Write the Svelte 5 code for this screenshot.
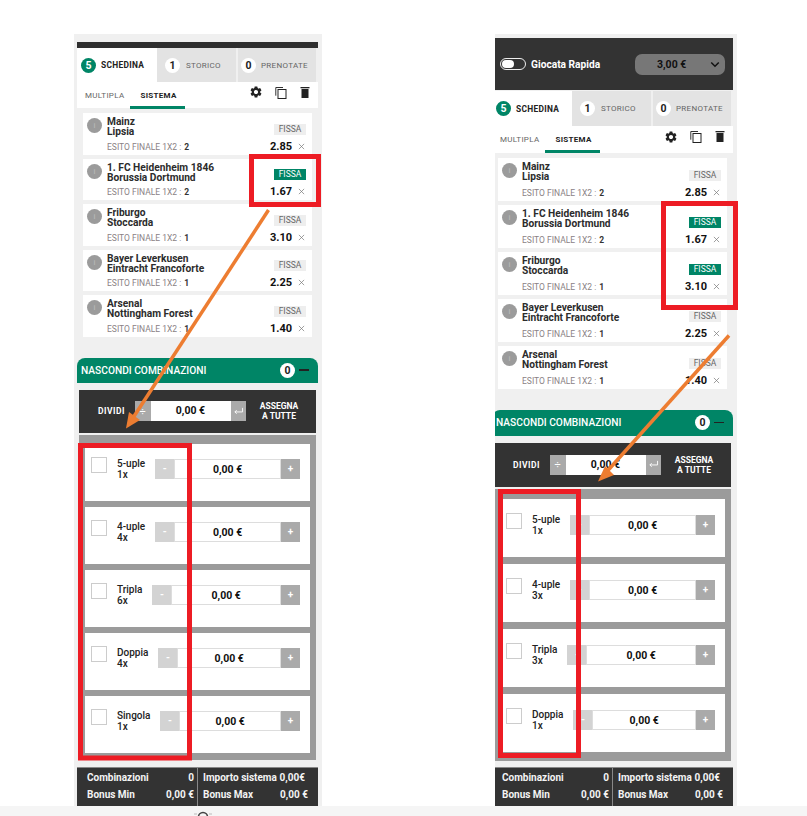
<script>
  const matches = [
    { home: "Mainz", away: "Lipsia", pick: "2", odd: "2.85" },
    { home: "1. FC Heidenheim 1846", away: "Borussia Dortmund", pick: "2", odd: "1.67" },
    { home: "Friburgo", away: "Stoccarda", pick: "1", odd: "3.10" },
    { home: "Bayer Leverkusen", away: "Eintracht Francoforte", pick: "1", odd: "2.25" },
    { home: "Arsenal", away: "Nottingham Forest", pick: "1", odd: "1.40" }
  ];

  const leftCombos = [
    { name: "5-uple", count: "1x" },
    { name: "4-uple", count: "4x" },
    { name: "Tripla", count: "6x" },
    { name: "Doppia", count: "4x" },
    { name: "Singola", count: "1x" }
  ];

  const rightCombos = [
    { name: "5-uple", count: "1x" },
    { name: "4-uple", count: "3x" },
    { name: "Tripla", count: "3x" },
    { name: "Doppia", count: "1x" }
  ];
</script>

{#snippet slip(fixed, combos)}
  <div class="tabs">
    <div class="tab active"><span class="num">5</span><span>SCHEDINA</span></div>
    <div class="tab"><span class="num">1</span><span>STORICO</span></div>
    <div class="tab last"><span class="num">0</span><span>PRENOTATE</span></div>
  </div>

  <div class="subtabs">
    <span class="sub">MULTIPLA</span>
    <span class="sub current">SISTEMA</span>
    <div class="tools">
      <svg viewBox="0 0 24 24" width="14" height="14">
        <path fill="#222" d="M19.14 12.94c.04-.3.06-.61.06-.94 0-.32-.02-.64-.07-.94l2.03-1.58a.49.49 0 0 0 .12-.61l-1.92-3.32a.488.488 0 0 0-.59-.22l-2.39.96c-.5-.38-1.03-.7-1.62-.94l-.36-2.54a.484.484 0 0 0-.48-.41h-3.84c-.24 0-.43.17-.47.41l-.36 2.54c-.59.24-1.13.57-1.62.94l-2.39-.96c-.22-.08-.47 0-.59.22L2.74 8.87c-.12.21-.08.47.12.61l2.03 1.58c-.05.3-.09.63-.09.94s.02.64.07.94l-2.03 1.58a.49.49 0 0 0-.12.61l1.92 3.32c.12.22.37.29.59.22l2.39-.96c.5.38 1.03.7 1.62.94l.36 2.54c.05.24.24.41.48.41h3.84c.24 0 .44-.17.47-.41l.36-2.54c.59-.24 1.13-.56 1.62-.94l2.39.96c.22.08.47 0 .59-.22l1.92-3.32c.12-.22.07-.47-.12-.61l-2.01-1.58zM12 15.6c-1.98 0-3.6-1.62-3.6-3.6s1.62-3.6 3.6-3.6 3.6 1.62 3.6 3.6-1.62 3.6-3.6 3.6z"/>
      </svg>
      <svg viewBox="0 0 12 13" width="12" height="13">
        <path fill="none" stroke="#333" d="M8 1.500H.8v8.200"/>
        <rect x="3" y="3.500" width="8" height="9" fill="#fff" stroke="#222"/>
      </svg>
      <svg viewBox="0 0 12 13" width="12" height="13">
        <rect x="1.500" y="1" width="9" height="1.300" fill="#222"/>
        <rect x="2.500" y="3" width="7" height="9" fill="#222"/>
      </svg>
    </div>
  </div>

  <div class="list">
    {#each matches as m, i}
      <div class="card">
        <span class="info">i</span>
        <div class="teams">
          <div class="names">{m.home}<br />{m.away}</div>
          <div class="esito">ESITO FINALE 1X2 : <b>{m.pick}</b></div>
        </div>
        <div class="side">
          <span class="badge" class:on={fixed.includes(i)}>FISSA</span>
          <div class="odd">
            <b>{m.odd}</b>
            <svg viewBox="0 0 8 8" width="7" height="7">
              <path stroke="#777" stroke-width="0.8" d="M1 1l6 6M7 1l-6 6"/>
            </svg>
          </div>
        </div>
      </div>
    {/each}
  </div>

  <div class="combo-head">
    <span>NASCONDI COMBINAZIONI</span>
    <span class="num light">0</span>
    <i class="dash"></i>
  </div>

  <div class="divide">
    <span class="divide-label">DIVIDI</span>
    <div class="divide-field">
      <span class="sq">÷</span>
      <span class="value">0,00 €</span>
      <span class="sq">
        <svg viewBox="0 0 12 10" width="11" height="9">
          <path fill="none" stroke="#fff" d="M10.500 1v4.500H2M4 3.500l-2 2 2 2"/>
        </svg>
      </span>
    </div>
    <span class="assign">ASSEGNA<br />A TUTTE</span>
  </div>

  <div class="combos">
    {#each combos as c}
      <div class="row">
        <span class="check"></span>
        <div class="label">{c.name}<br />{c.count}</div>
        <div class="stepper">
          <span class="minus">-</span>
          <span class="amount">0,00 €</span>
          <span class="plus">+</span>
        </div>
      </div>
    {/each}
  </div>

  <div class="summary">
    <div class="sum-col">
      <div><span>Combinazioni</span><span>0</span></div>
      <div><span>Bonus Min</span><span>0,00 €</span></div>
    </div>
    <div class="sum-col second">
      <div class="inset"><span>Importo sistema</span><span>0,00€</span></div>
      <div><span>Bonus Max</span><span>0,00 €</span></div>
    </div>
  </div>
{/snippet}

<div class="page">
  <div class="columns">
    <section class="col left">
      <div class="slip">
        <div class="topbar"></div>
        {@render slip([1], leftCombos)}
      </div>
    </section>

    <section class="col right">
      <div class="slip">
        <div class="quick">
          <span class="toggle"><i></i></span>
          <span class="quick-label">Giocata Rapida</span>
          <div class="stake">
            <span>3,00 €</span>
            <svg viewBox="0 0 12 8" width="10" height="7">
              <path fill="none" stroke="#111" stroke-width="1.8" d="M1.500 1.500L6 6l4.500-4.500"/>
            </svg>
          </div>
        </div>
        {@render slip([1, 2], rightCombos)}
      </div>
    </section>
  </div>

  <div class="strip">
    <svg viewBox="0 0 20 10" width="20" height="10">
      <circle cx="10" cy="11" r="4.500" fill="none" stroke="#444" stroke-width="1.6"/>
      <path stroke="#bbb" d="M1 8h3M16 8h3"/>
    </svg>
  </div>

  <!-- annotations drawn on top of the screenshot -->
  <svg class="notes" viewBox="0 0 807 816" width="807" height="816">
    <g fill="none" stroke="#ed1c24" stroke-width="5">
      <rect x="251.500" y="156.500" width="67" height="48"/>
      <rect x="80.500" y="445.500" width="109" height="312.500"/>
      <rect x="663.500" y="203.500" width="72" height="104"/>
      <rect x="500.500" y="491.500" width="78" height="264"/>
    </g>
    <g stroke="#ed7d31" stroke-width="3.500" fill="none">
      <path d="M268.500 210L129 424"/>
      <path d="M729 335.500L602 477"/>
    </g>
    <g fill="#ed7d31">
      <path d="M126 428.500L129 412L140 420z"/>
      <path d="M598 481.500L605 466L614 475z"/>
    </g>
  </svg>
</div>

<style>
  :global(body) {
    background: #fff;
  }

  .page {
    position: relative;
    width: 807px;
    height: 816px;
    overflow: hidden;
    font-family: Roboto, "Liberation Sans", sans-serif;
    color: #222;
  }

  .columns {
    display: flex;
    align-items: flex-start;
    height: 806px;
  }

  .col {
    background: #f0f0f0;
    box-sizing: border-box;
    height: 772px;
    overflow: hidden;
  }

  .col.left {
    width: 248px;
    margin: 34px 0 0 74px;
    padding: 8px 0 0 3px;
  }

  .col.right {
    width: 242px;
    margin: 34px 0 0 173px;
    padding: 4px 0 0 0;
  }

  .slip {
    width: 241px;
  }

  .right .slip {
    margin-left: -3px;
  }

  .topbar {
    height: 6px;
    background: #2f2f2f;
  }

  /* quick bet bar */
  .quick {
    height: 52px;
    margin-bottom: 1px;
    padding: 0 8px 0 8px;
    box-sizing: border-box;
    background: #333;
    display: flex;
    align-items: center;
    color: #fff;
  }

  .toggle {
    width: 26px;
    height: 12px;
    margin-right: 5px;
    box-sizing: border-box;
    border: 1px solid #eee;
    border-radius: 7px;
    padding: 1px;
    display: flex;
  }

  .toggle i {
    width: 12px;
    height: 8px;
    border-radius: 4px;
    background: #fff;
  }

  .quick-label {
    font-size: 10.200px;
    font-weight: 700;
    white-space: nowrap;
  }

  .stake {
    margin-left: auto;
    width: 90px;
    height: 21px;
    box-sizing: border-box;
    padding: 0 5px 0 22px;
    border-radius: 7px;
    background: #777;
    display: flex;
    align-items: center;
    justify-content: space-between;
    color: #111;
    font-size: 10.500px;
    font-weight: 700;
  }

  /* tabs */
  .tabs {
    display: flex;
    height: 34px;
  }

  .right .tabs {
    height: 35px;
  }

  .tab {
    width: 79px;
    box-sizing: border-box;
    padding-left: 8px;
    background: #e3e3e3;
    display: flex;
    align-items: center;
    gap: 6px;
    font-size: 8px;
    letter-spacing: 0.3px;
    color: #666;
  }

  .tab.active {
    width: 80px;
    padding-left: 4px;
    gap: 5px;
    background: #fff;
    color: #222;
    font-size: 8.400px;
    font-weight: 700;
  }

  .tab.last {
    width: 78px;
    margin-left: 2px;
    padding-left: 3px;
    gap: 5px;
  }

  .num {
    width: 15px;
    height: 15px;
    flex: none;
    border-radius: 50%;
    background: #fff;
    color: #222;
    display: flex;
    align-items: center;
    justify-content: center;
    font-size: 10.500px;
    font-weight: 700;
    letter-spacing: 0;
  }

  .active .num {
    background: #008566;
    color: #fff;
  }

  .subtabs {
    height: 26px;
    padding-left: 8px;
    background: #fff;
    display: flex;
    align-items: center;
    gap: 16px;
    font-size: 8px;
    letter-spacing: 0.3px;
    color: #666;
  }

  .right .subtabs {
    height: 27px;
  }

  .sub.current {
    position: relative;
    color: #222;
    font-weight: 700;
  }

  .sub.current::after {
    content: "";
    position: absolute;
    left: -10px;
    right: -8px;
    bottom: -9px;
    height: 3px;
    background: #008566;
  }

  .tools {
    margin-left: auto;
    margin-right: 7px;
    margin-bottom: 6px;
    display: flex;
    align-items: center;
    gap: 12px;
  }

  /* match cards */
  .list {
    margin: 5px 6px 0;
    display: flex;
    flex-direction: column;
    gap: 4px;
  }

  .right .list {
    gap: 4.500px;
  }

  .card {
    height: 41.500px;
    box-sizing: border-box;
    padding: 4px 6px 2px 4px;
    background: #fff;
    display: flex;
  }

  .right .card {
    height: 42.500px;
  }

  .info {
    width: 15px;
    height: 15px;
    margin: 1px 5px 0 0;
    flex: none;
    border-radius: 50%;
    background: #9b9b9b;
    color: #bbb;
    display: flex;
    align-items: center;
    justify-content: center;
    font-size: 8px;
  }

  .teams {
    flex: 1;
    display: flex;
    flex-direction: column;
    justify-content: space-between;
    min-width: 0;
  }

  .names {
    font-size: 10.200px;
    font-weight: 700;
    line-height: 10px;
    white-space: nowrap;
    color: #2c2c2c;
  }

  .esito {
    font-size: 8.500px;
    line-height: 11px;
    color: #8a8184;
  }

  .esito b {
    color: #333;
    margin-left: 1px;
  }

  .side {
    display: flex;
    flex-direction: column;
    align-items: flex-end;
    justify-content: flex-end;
    gap: 3px;
  }

  .badge {
    width: 32px;
    height: 11px;
    margin-bottom: 2px;
    background: #eee;
    color: #666;
    text-align: center;
    font-size: 8.500px;
    line-height: 11px;
  }

  .badge.on {
    background: #008566;
    color: #fff;
  }

  .odd {
    display: flex;
    align-items: center;
    gap: 6px;
    margin-right: 1px;
    font-size: 11px;
    line-height: 13px;
    color: #111;
  }

  /* combinations */
  .combo-head {
    height: 25px;
    margin-top: 21px;
    padding: 0 9px 0 4px;
    box-sizing: border-box;
    border-radius: 8px 8px 0 0;
    background: #008566;
    color: #fff;
    display: flex;
    align-items: center;
    font-size: 10.200px;
    font-weight: 500;
    white-space: nowrap;
  }

  .right .combo-head {
    height: 26px;
  }

  .combo-head .light {
    margin-left: auto;
    margin-right: 4px;
  }

  .dash {
    width: 10px;
    height: 1.500px;
    background: #222;
  }

  .divide {
    height: 43px;
    margin: 7px 2px 2px;
    background: #333;
    display: flex;
    align-items: center;
    color: #fff;
    font-size: 8.500px;
    font-weight: 700;
  }

  .right .divide {
    height: 44px;
  }

  .divide-label {
    width: 56px;
    box-sizing: border-box;
    padding-left: 19px;
    letter-spacing: 0.5px;
  }

  .divide-field {
    display: flex;
    height: 20px;
    background: #aaa;
  }

  .sq {
    width: 15.500px;
    display: flex;
    align-items: center;
    justify-content: center;
    color: #fff;
    font-size: 11px;
    font-weight: 400;
  }

  .value {
    width: 80px;
    background: #fff;
    color: #111;
    text-align: center;
    font-size: 10.500px;
    line-height: 20px;
  }

  .assign {
    flex: 1;
    text-align: center;
    line-height: 10px;
    padding-right: 4px;
  }

  .combos {
    height: 325px;
    box-sizing: border-box;
    margin: 0 2px;
    padding: 9px 6px 0;
    background: #9b9b9b;
    display: flex;
    flex-direction: column;
    gap: 6px;
  }

  .right .combos {
    height: 272px;
    padding-top: 10px;
    gap: 7px;
  }

  .row {
    height: 57px;
    box-sizing: border-box;
    padding: 13px 10px 0 6px;
    background: #fff;
    display: flex;
    align-items: flex-start;
  }

  .right .row {
    height: 58px;
    padding-top: 14px;
  }

  .check {
    width: 16px;
    height: 16px;
    flex: none;
    box-sizing: border-box;
    border: 1px solid #ccc;
  }

  .label {
    margin: 1px 10px 0 10px;
    font-size: 10px;
    line-height: 11px;
    font-weight: 500;
    color: #222;
    white-space: nowrap;
  }

  .stepper {
    flex: 1;
    height: 20px;
    margin-top: 2px;
    display: flex;
    min-width: 0;
  }

  .minus,
  .plus {
    width: 19px;
    flex: none;
    color: #fff;
    display: flex;
    align-items: center;
    justify-content: center;
    font-size: 10px;
    font-weight: 700;
  }

  .minus {
    background: #d3d3d3;
  }

  .plus {
    background: #aaa;
  }

  .amount {
    flex: 1;
    height: 20px;
    box-sizing: border-box;
    border: 1px solid #ddd;
    background: #fff;
    color: #111;
    text-align: center;
    font-size: 10.500px;
    font-weight: 700;
    line-height: 19px;
  }

  .summary {
    height: 39px;
    margin-top: 7px;
    box-sizing: border-box;
    border-top: 1px solid #888;
    background: #333;
    color: #f4f4f4;
    display: flex;
    font-size: 10px;
    font-weight: 700;
  }

  .right .summary {
    margin-top: 6px;
  }

  .sum-col {
    width: 120px;
    box-sizing: border-box;
    padding: 4px 3px 0 10px;
    display: flex;
    flex-direction: column;
    gap: 5px;
  }

  .sum-col.second {
    width: 121px;
    padding: 4px 10px 0 5px;
    border-left: 1px solid #888;
  }

  .sum-col div {
    display: flex;
    justify-content: space-between;
    line-height: 12px;
    white-space: nowrap;
  }

  .sum-col .inset {
    margin-right: 3px;
  }

  .strip {
    height: 10px;
    padding-left: 193px;
    background: #f5f5f5;
    display: flex;
  }

  .notes {
    position: absolute;
    left: 0;
    top: 0;
    pointer-events: none;
  }
</style>
